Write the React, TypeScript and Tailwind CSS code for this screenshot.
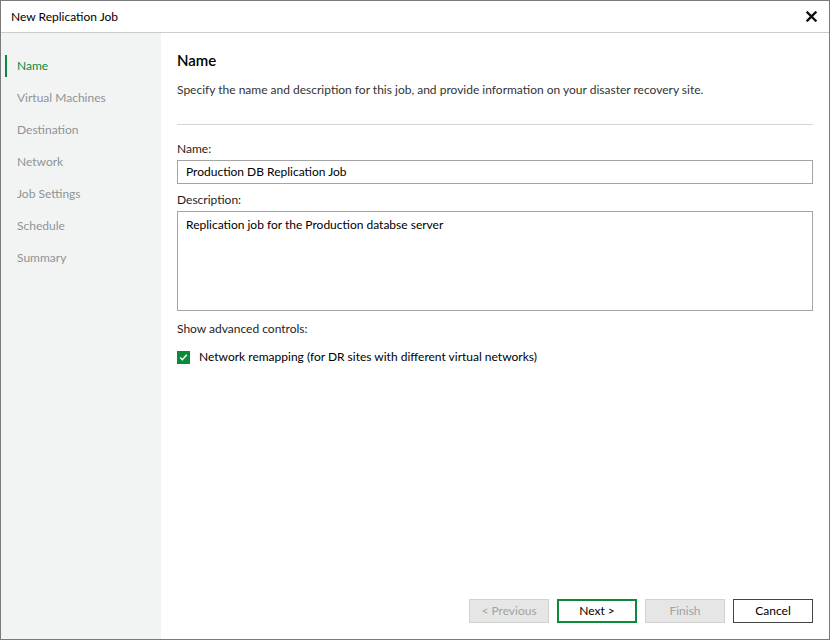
const STEPS = ["Name", "Virtual Machines", "Destination", "Network", "Job Settings", "Schedule", "Summary"];

export default function App() {
  return (
    <div
      className="w-[830px] h-[640px] bg-white border border-[#7a7a7a] flex flex-col text-[12px] text-[#1e1e1e]"
      style={{ fontFamily: '"Segoe UI", Lato, "Noto Sans", sans-serif' }}
    >
      <div className="h-[32px] shrink-0 flex items-center justify-between pl-[10px] pr-[10px] border-b border-[#cccccc]">
        <span className="text-[12px] text-black">New Replication Job</span>
        <svg width="11" height="11" viewBox="0 0 11 11" className="mr-[2px]">
          <path d="M1.5 1.5 L9.5 9.5 M9.5 1.5 L1.5 9.5" stroke="#111" strokeWidth="2.4" strokeLinecap="square" />
        </svg>
      </div>

      <div className="flex flex-1 min-h-0">
        <div className="w-[160px] shrink-0 bg-[#f2f3f3] pt-[17px] flex flex-col">
          {STEPS.map((s, i) => (
            <div key={s} className="relative h-[32px] flex items-center pl-[16px]">
              {i === 0 && <div className="absolute left-[4px] top-[5px] w-[2px] h-[22px] bg-[#0c8a3c]" />}
              <span className={i === 0 ? "text-[#0c8a3c]" : "text-[#8f9395]"}>{s}</span>
            </div>
          ))}
        </div>

        <div className="flex-1 flex flex-col pl-[16px] pr-[16px]">
          <div className="pt-[17px] text-[15px] font-semibold text-black leading-[20px]">Name</div>
          <div className="mt-[12px] leading-[16px] text-[#333]">
            Specify the name and description for this job, and provide information on your disaster recovery site.
          </div>
          <div className="mt-[26px] h-px bg-[#d4d4d4]" />

          <div className="mt-[16px] leading-[16px]">Name:</div>
          <div className="mt-[3px] h-[24px] border border-[#a5a5a5] flex items-center px-[8px] text-black">
            Production DB Replication Job
          </div>
          <div className="mt-[8px] leading-[16px]">Description:</div>
          <div className="mt-[3px] h-[100px] border border-[#a5a5a5] px-[8px] pt-[5px] text-black leading-[16px]">
            Replication job for the Production databse server
          </div>

          <div className="mt-[10px] leading-[16px]">Show advanced controls:</div>
          <div className="mt-[11px] flex items-center gap-[9px]">
            <div className="w-[13px] h-[13px] bg-[#0c8a3c] flex items-center justify-center">
              <svg width="9" height="9" viewBox="0 0 9 9">
                <path d="M1.2 4.6 L3.4 6.8 L7.8 1.8" stroke="#fff" strokeWidth="1.4" fill="none" />
              </svg>
            </div>
            <span className="text-black">Network remapping (for DR sites with different virtual networks)</span>
          </div>

          <div className="mt-auto mb-[16px] flex justify-end gap-[8px]">
            <button className="w-[80px] h-[24px] bg-[#e6e6e6] border border-[#d0d0d0] text-[#a3a3a3]">&lt; Previous</button>
            <button className="w-[80px] h-[24px] bg-white border-2 border-[#0c8a3c] text-black">Next &gt;</button>
            <button className="w-[80px] h-[24px] bg-[#e6e6e6] border border-[#d0d0d0] text-[#a3a3a3]">Finish</button>
            <button className="w-[80px] h-[24px] bg-white border border-[#444] text-black">Cancel</button>
          </div>
        </div>
      </div>
    </div>
  );
}
